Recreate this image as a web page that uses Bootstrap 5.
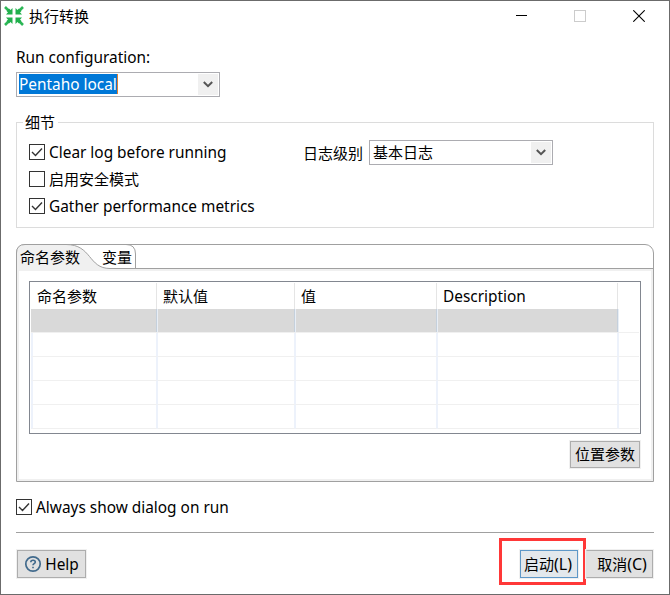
<!DOCTYPE html>
<html lang="zh-CN">
<head>
<meta charset="utf-8">
<title>执行转换</title>
<link href="https://cdn.jsdelivr.net/npm/bootstrap@5.3.0/dist/css/bootstrap.min.css" rel="stylesheet">
<style>
html, body { height: 100%; overflow: hidden; }
body { font-family: "Noto Sans", "Noto Sans CJK SC", sans-serif; font-size: 15px; line-height: 20px; color: #000; }
svg { display: block; flex: none; }
.latin { font-size: 15.4px; line-height: 22px; }
span.latin { margin-top: 2px; }
.dialog { width: 670px; height: 595px; border: 1px solid #6b6b6b; background: #fff; white-space: nowrap; }
.titlebar { height: 30px; padding: 0 24px 0 3px; }
.win-controls { gap: 47px; }
.app-name { margin-left: 5px; }
.content { padding: 0 15px; }
.run-label { margin-top: 16px; height: 25px; }
.combo { height: 25px; border: 1px solid #acacb1; padding: 1px; }
.combo-run { width: 204px; }
.combo-log { width: 184px; }
.combo-log > span { padding-left: 2px; }
.picked { background: #0078d7; color: #fff; height: 20px; width: 99px; margin-left: 1px; border-right: 1px solid #e08030; }
.arrow { width: 20px; height: 21px; background: #f0f0f0; }
.arrow svg { margin-right: 1px; }
.details { margin-top: 15px; height: 116px; border: 1px solid #dcdcdc; padding: 0 12px; }
.details legend { font-size: 15px; line-height: 20px; height: 20px; width: 35px; padding-left: 2px; margin: 0 0 0 -6px; background: #fff; float: none; }
.opts { width: 274px; padding-top: 10px; }
.tick { width: 16px; height: 16px; border: 1px solid #333; margin-right: 4px; flex: none; }
.opt { height: 20px; margin-bottom: 7px; }
.log-label { width: 66px; }
.tabs-box { margin-top: 16px; height: 238px; border: 1px solid #a0a0a0; border-radius: 9px 9px 0 0; }
.tab-head { height: 24px; }
.tab-head .tab-shape { left: -1px; top: -1px; }
.tab-names { padding: 2px 0 0 3px; gap: 22px; }
.tab-page { height: 212px; border: 2px solid #f0f0f0; padding: 10px 10px 0; }
.params { width: 612px; height: 153px; border: 1px solid #828790; padding: 1px; }
.params-grid { display: grid; grid-template-columns: 127px 138px 142px 181px 1fr; grid-template-rows: 26px repeat(5, 24px); height: 149px; overflow: hidden; }
.params-grid > div { border-bottom: 1px solid #f0f0f0; border-right: 2px solid #edf2fb; }
.params-grid > .hd { border-bottom: 0; border-right: 1px solid #e5e5e5; margin-right: 1px; padding: 3px 0 0 5px; }
.params-grid > .hd:first-child { padding-left: 6px; }
.params-grid > .sel { background: #d9d9d9; border-right: 1px solid #e8eef6; box-shadow: inset -1px 0 #c5d0dc; }
.params-grid > .end { border-right: 0; }
.params-grid > .lead-cell { border-left: 2px solid #edf2fb; }
.cmd, .cmd:hover { background: #e1e1e1; border: 1px solid #adadad; outline: 1px solid #f0f0f0; border-radius: 0; color: #000; padding: 0; font-size: 15px; line-height: 20px; height: 28px; }
.cmd-pos { width: 70px; height: 27px; margin: 7px 1px 0 0; padding-bottom: 1px; }
.cmd-help { width: 69px; gap: 3px; margin-left: 1px; }
.cmd-start { width: 58px; border-color: #5e98c8; background: #e3e8ec; padding-right: 2px; }
.cmd-cancel { width: 67px; margin-right: 1px; padding-left: 5px; border-left-color: #e1e1e1; }
.par { font-size: 16px; }
.always { margin-top: 17px; height: 16px; }
.rule { margin-top: 17px; height: 1px; background: #a0a0a0; }
.foot { margin-top: 17px; }
.highlight { width: 87px; height: 47px; border: 3px solid #ff3838; padding: 9px 5px 0 18px; margin: -12px 0 -8px; }
</style>
</head>
<body>
<div class="dialog">
  <div class="titlebar d-flex align-items-center justify-content-between">
    <div class="d-flex align-items-center">
      <svg width="20" height="20" viewBox="0 0 20 20" stroke="#2db757"><path d="M1 1l5 5M19 1l-5 5M1 19l5-5M19 19l-5-5" stroke-width="2.6"/><path d="M8.500 2v6.500H2l2-2.200L2.500 5l2.500-2.500 1.500 1.500zM11.500 2v6.500H18l-2-2.200L17.500 5 15 2.500 13.500 4zM8.500 18v-6.500H2l2 2.200L2.500 15 5 17.500 6.500 16zM11.500 18v-6.500H18l-2 2.200 1.500 1.300-2.500 2.500-1.500-1.500z" fill="#20b04c" stroke="none"/></svg>
      <span class="app-name">执行转换</span>
    </div>
    <div class="win-controls d-flex align-items-center">
      <svg width="12" height="12"><path d="M1 5.500h12" stroke="#000" /></svg>
      <svg width="12" height="12"><rect x=".5" y=".5" width="11" height="11" fill="none" stroke="#ccc"/></svg>
      <svg width="12" height="12"><path d="M.3.3l11.400 11.400M11.700.3L.3 11.700" stroke="#000" stroke-width="1.100"/></svg>
    </div>
  </div>
  <div class="content">
    <div class="run-label latin">Run configuration:</div>
    <div class="combo combo-run d-flex justify-content-between">
      <div class="picked latin">Pentaho local</div>
      <div class="arrow d-flex align-items-center justify-content-center"><svg width="10" height="7"><path d="M.8 1L5 5.200 9.200 1" fill="none" stroke="#555" stroke-width="2"/></svg></div>
    </div>

    <fieldset class="details">
      <legend>细节</legend>
      <div class="d-flex">
        <div class="opts">
          <div class="opt d-flex align-items-center"><div class="tick"><svg width="14" height="14"><path d="M2 7l3.500 3.500L12 3.500" fill="none" stroke="#333" stroke-width="1.400"/></svg></div><span class="latin">Clear log before running</span></div>
          <div class="opt d-flex align-items-center"><div class="tick"></div><span>启用安全模式</span></div>
          <div class="opt d-flex align-items-center"><div class="tick"><svg width="14" height="14"><path d="M2 7l3.500 3.500L12 3.500" fill="none" stroke="#333" stroke-width="1.400"/></svg></div><span class="latin">Gather performance metrics</span></div>
        </div>
        <div class="d-flex align-items-center align-self-start mt-2">
          <span class="log-label">日志级别</span>
          <div class="combo combo-log d-flex justify-content-between">
            <span>基本日志</span>
            <div class="arrow d-flex align-items-center justify-content-center"><svg width="10" height="7"><path d="M.8 1L5 5.200 9.200 1" fill="none" stroke="#555" stroke-width="2"/></svg></div>
          </div>
        </div>
      </div>
    </fieldset>

    <div class="tabs-box">
      <div class="tab-head position-relative">
        <svg class="tab-shape position-absolute" width="638" height="25" fill="none" stroke="#a0a0a0">
          <path d="M.5 25V9Q.5.5 9 .5H50C76 .5 72 24.500 94 24.500V25Z" fill="#f0f0f0" stroke="none"/>
          <path d="M.5 25V9Q.5.5 9 .5H50C76 .5 72 24.500 94 24.500H638M110 .5Q119.500.5 119.500 10V24.500"/>
        </svg>
        <div class="position-relative d-flex tab-names"><span>命名参数</span><span>变量</span></div>
      </div>
      <div class="tab-page">
        <div class="params">
          <div class="params-grid">
            <div class="hd">命名参数</div><div class="hd">默认值</div><div class="hd">值</div><div class="hd latin">Description</div><div class="end border-bottom-0"></div>
            <div class="sel"></div><div class="sel"></div><div class="sel"></div><div class="sel"></div><div class="end"></div>
            <div class="lead-cell"></div><div></div><div></div><div></div><div class="end"></div>
            <div class="lead-cell"></div><div></div><div></div><div></div><div class="end"></div>
            <div class="lead-cell"></div><div></div><div></div><div></div><div class="end"></div>
            <div class="lead-cell"></div><div></div><div></div><div></div><div class="end"></div>
          </div>
        </div>
        <div class="d-flex justify-content-end"><button class="btn cmd cmd-pos">位置参数</button></div>
      </div>
    </div>

    <div class="always d-flex align-items-center"><div class="tick"><svg width="14" height="14"><path d="M2 7l3.500 3.500L12 3.500" fill="none" stroke="#333" stroke-width="1.400"/></svg></div><span class="latin">Always show dialog on run</span></div>
    <div class="rule"></div>
    <div class="foot d-flex justify-content-between align-items-start">
      <button class="btn cmd cmd-help d-flex align-items-center justify-content-center"><svg width="18" height="18" fill="none" stroke="#416a8c"><circle cx="9" cy="9" r="7.200" stroke-width="1.700"/><path d="M6.800 7.200C6.800 4.500 11.300 4.600 11.300 7.100 11.300 8.700 9 8.700 9 10.300M9 11.700V13.200" stroke-width="1.600"/></svg><span class="latin">Help</span></button>
      <div class="d-flex align-items-start">
        <div class="highlight"><button class="btn cmd cmd-start">启动<span class="par">(L)</span></button></div>
        <button class="btn cmd cmd-cancel">取消<span class="par">(C)</span></button>
      </div>
    </div>
  </div>
</div>
<script src="https://cdn.jsdelivr.net/npm/bootstrap@5.3.0/dist/js/bootstrap.bundle.min.js"></script>
</body>
</html>
